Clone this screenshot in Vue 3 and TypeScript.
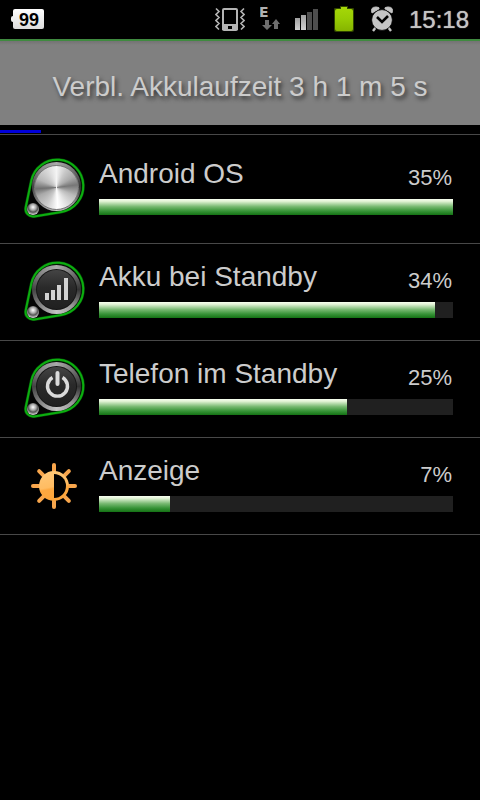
<script setup lang="ts">
type IconKind = 'metal' | 'signal' | 'power' | 'sun'

interface UsageItem {
  name: string
  percent: number
  fill: number
  icon: IconKind
}

const items: UsageItem[] = [
  { name: 'Android OS', percent: 35, fill: 100, icon: 'metal' },
  { name: 'Akku bei Standby', percent: 34, fill: 95, icon: 'signal' },
  { name: 'Telefon im Standby', percent: 25, fill: 70, icon: 'power' },
  { name: 'Anzeige', percent: 7, fill: 20, icon: 'sun' },
]

const rays: number[] = [0, 45, 90, 135, 180, 225, 270, 315]
const elapsed = 8.6
</script>

<template>
  <div class="screen">
    <div class="status">
      <svg class="badge" width="34" height="39" viewBox="0 0 34 39">
        <defs>
          <linearGradient id="badge-fill" x1="0" y1="0" x2="0" y2="1">
            <stop offset="0" stop-color="#fff" />
            <stop offset="1" stop-color="#dcdcdc" />
          </linearGradient>
        </defs>
        <rect x="0" y="16" width="4" height="6" rx="2" fill="#eee" />
        <rect x="2" y="9" width="31" height="20" rx="2" fill="url(#badge-fill)" />
        <text x="18" y="26" text-anchor="middle" class="badge-text">99</text>
      </svg>

      <div class="indicators">
        <svg width="30" height="39" viewBox="0 0 30 39" fill="none" stroke="#b4b4b4">
          <path d="M1 9l3 3-3 3 3 3-3 3 3 3-3 3 3 3M29 9l-3 3 3 3-3 3 3 3-3 3 3 3-3 3" transform="translate(0 -0.5)" stroke-width="1.6" />
          <rect x="8" y="9" width="14" height="21" rx="1" stroke-width="2" />
          <path d="M7 24h16v6H7z" fill="#b4b4b4" stroke="none" />
          <path d="M13 26h4v3h-4z" fill="#000" stroke="none" />
        </svg>
        <svg width="20" height="39" viewBox="0 0 20 39">
          <text x="-1" y="17" class="edge-text">E</text>
          <path d="M5 20h4v5h3l-5 5-5-5h3z" fill="#6e6e6e" />
          <path d="M14 29h4v-5h2l-4-5-4 5h2z" fill="#6e6e6e" />
        </svg>
        <svg width="23" height="39" viewBox="0 0 23 39">
          <defs>
            <linearGradient id="bar-fill" x1="0" y1="0" x2="0" y2="1">
              <stop offset="0" stop-color="#a0a0a0" />
              <stop offset="1" stop-color="#d0d0d0" />
            </linearGradient>
          </defs>
          <rect x="0" y="18" width="5" height="12" fill="url(#bar-fill)" />
          <rect x="6" y="15" width="5" height="15" fill="url(#bar-fill)" />
          <rect x="12" y="12" width="5" height="18" fill="#4e4e4e" />
          <rect x="18" y="9" width="5" height="21" fill="#4e4e4e" />
        </svg>
        <svg width="22" height="39" viewBox="0 0 22 39">
          <defs>
            <linearGradient id="battery-fill" x1="0" y1="0" x2="0" y2="1">
              <stop offset="0" stop-color="#a6d808" />
              <stop offset="0.5" stop-color="#98cc04" />
              <stop offset="1" stop-color="#86b400" />
            </linearGradient>
          </defs>
          <path d="M7 6h8v2h5q1 0 1 1v21q0 2-2 2H3q-2 0-2-2V9q0-1 1-1h5z" fill="#304400" />
          <path d="M8 7h6v2h4q2 0 2 2v18q0 2-2 2H4q-2 0-2-2V11q0-2 2-2h4z" fill="url(#battery-fill)" />
        </svg>
        <svg width="24" height="39" viewBox="0 0 24 39">
          <path d="M2 13Q0 7 6 7Q10 7 9 9Z" fill="#c4c4c4" stroke="#c4c4c4" stroke-linejoin="round" />
          <path d="M22 13Q24 7 18 7Q14 7 15 9Z" fill="#c4c4c4" stroke="#c4c4c4" stroke-linejoin="round" />
          <path d="M6 27l-3 4M18 27l3 4" stroke="#c4c4c4" stroke-width="2.4" />
          <circle cx="12" cy="20" r="10.4" fill="#c4c4c4" stroke="#000" stroke-width="0.8" />
          <path d="M7 17l5 5 6-6" fill="none" stroke="#000" stroke-width="2.6" />
        </svg>
        <time class="clock">15:18</time>
      </div>
    </div>

    <header class="head">
      <h1>Verbl. Akkulaufzeit 3 h 1 m 5 s</h1>
    </header>
    <div class="elapsed">
      <div class="elapsed-fill" :style="{ width: elapsed + '%' }"></div>
    </div>

    <ul class="list">
      <li v-for="item in items" :key="item.name" class="row">
        <svg v-if="item.icon !== 'sun'" class="icon" width="64" height="64" viewBox="0 0 64 64">
          <path
            d="M9.3 23.6A26.3 26.3 0 1 1 39.3 55L12.2 59.4A7.5 7.5 0 0 1 3.7 50.5Z"
            fill="#050505" stroke="#064a06" stroke-width="3"
          />
          <foreignObject x="10" y="5" width="49" height="49">
            <div class="rim"></div>
          </foreignObject>
          <template v-if="item.icon === 'metal'">
            <foreignObject x="12" y="8" width="45" height="45">
              <div class="disc"></div>
            </foreignObject>
          </template>
          <template v-else>
            <circle cx="34.5" cy="29.5" r="20.5" fill="#161616" />
            <foreignObject x="15" y="10" width="39" height="39">
              <div class="face"></div>
            </foreignObject>
          </template>
          <g v-if="item.icon === 'signal'" fill="#d2d2d2">
            <rect x="23" y="33" width="4" height="7" />
            <rect x="29" y="30" width="4" height="10" />
            <rect x="35" y="25" width="4" height="15" />
            <rect x="42" y="18" width="4" height="22" />
          </g>
          <g v-if="item.icon === 'power'" fill="none" stroke="#dadada">
            <path d="M30.5 20.5A10 10 0 1 0 40.5 20.5" stroke-width="3.4" />
            <path d="M35.5 16v11" stroke-width="4" stroke-linecap="round" />
          </g>
          <path
            d="M9.3 23.6A26.3 26.3 0 1 1 39.3 55L12.2 59.4A7.5 7.5 0 0 1 3.7 50.5Z"
            fill="none" stroke="#0cae10" stroke-width="2"
          />
          <foreignObject x="5" y="46" width="12" height="12">
            <div class="rivet"></div>
          </foreignObject>
        </svg>
        <svg v-else class="icon" width="64" height="64" viewBox="0 0 64 64">
          <defs>
            <linearGradient id="sun-fill" x1="0.2" y1="0" x2="0.4" y2="1">
              <stop offset="0" stop-color="#ffc878" />
              <stop offset="0.55" stop-color="#ffbc62" />
              <stop offset="0.62" stop-color="#fda840" />
              <stop offset="1" stop-color="#fda63c" />
            </linearGradient>
          </defs>
          <g transform="translate(32 32)">
            <path
              v-for="angle in rays" :key="angle" d="M0 -15V-21" :transform="'rotate(' + angle + ')'"
              stroke="#f8a64c" stroke-width="4" stroke-linecap="round"
            />
            <circle r="15" fill="url(#sun-fill)" />
            <path d="M0 -12A12 12 0 0 1 0 12Z" fill="#000" />
          </g>
        </svg>

        <div class="body">
          <div class="line">
            <span class="name">{{ item.name }}</span>
            <span class="percent">{{ item.percent }}%</span>
          </div>
          <div
            class="track" role="progressbar" :aria-label="item.name" :aria-valuenow="item.percent"
            aria-valuemin="0" aria-valuemax="100"
          >
            <div class="fill" :style="{ width: item.fill + '%' }"></div>
          </div>
        </div>
      </li>
    </ul>
  </div>
</template>

<style>
body {
  margin: 0;
  background: #000;
}
</style>

<style scoped>
.screen {
  min-height: 100vh;
  background: #000;
  color: #ccc;
  font-family: "Liberation Sans", Arial, sans-serif;
}

svg {
  display: block;
  flex: none;
}

.status {
  display: flex;
  justify-content: space-between;
  height: 39px;
  padding: 0 11px;
}

.badge-text {
  font-size: 18px;
  font-weight: bold;
  fill: #000;
}

.edge-text {
  font-family: "DejaVu Sans", sans-serif;
  font-size: 14px;
  font-weight: bold;
  fill: #b0b0b0;
}

.indicators {
  display: flex;
  gap: 15px;
}

.clock {
  font-size: 24px;
  line-height: 39px;
  color: #c4c4c4;
  text-shadow: 0 0 1px #c4c4c4;
}

.head {
  display: flex;
  align-items: center;
  justify-content: center;
  height: 84px;
  border-top: 2px solid #3f8a3f;
  background: linear-gradient(#737373, #808080 4px);
}

h1 {
  margin: 0;
  padding-top: 8px;
  font-size: 28px;
  line-height: 30px;
  font-weight: normal;
  text-shadow: 2px 3px 4px #333;
}

.elapsed {
  padding: 5px 0 1px;
}

.elapsed-fill {
  height: 3px;
  background: #0000d8;
}

.list {
  margin: 0;
  padding: 0;
  list-style: none;
  border-top: 1px solid #484848;
}

.row {
  display: flex;
  align-items: center;
  gap: 13px;
  padding: 16px 27px 16px 22px;
  border-bottom: 1px solid #484848;
}

.row:first-child {
  padding-top: 22px;
  padding-bottom: 22px;
}

.body {
  flex: 1;
  min-width: 0;
  padding-bottom: 6px;
}

.line {
  display: flex;
  align-items: flex-start;
  justify-content: space-between;
  height: 42px;
}

.name {
  font-size: 28px;
  line-height: 34px;
}

.percent {
  padding: 2px 1px 0 0;
  font-size: 22px;
  line-height: 38px;
}

.track {
  height: 16px;
  background: #202020;
}

.fill {
  height: 100%;
  background: linear-gradient(#f8fff0, #e0f2d4 15%, #76b870 48%, #389438 75%, #147214);
}

.rim,
.disc,
.face,
.rivet {
  width: 100%;
  height: 100%;
  border-radius: 50%;
}

.rim {
  background: conic-gradient(#aaa, #777 12%, #333 25%, #999 38%, #c4c4c4 50%, #888 62%, #444 75%, #888 88%, #aaa);
}

.disc {
  box-sizing: border-box;
  border: 1px solid #777;
  background: conic-gradient(#f4f4f4, #c8c8c8 8%, #aaa 16%, #777 23%, #bbb 32%, #e4e4e4 42%, #fff 49%, #ccc 58%, #aaa 68%, #707070 74%, #b8b8b8 82%, #d8d8d8 92%, #f4f4f4);
}

.face {
  background: linear-gradient(#444, #2a2a2a 45%, #202020);
}

.rivet {
  background: radial-gradient(circle at 50% 35%, #fff, #aaa 30%, #555 50%, #ccc 75%, #666);
}
</style>
